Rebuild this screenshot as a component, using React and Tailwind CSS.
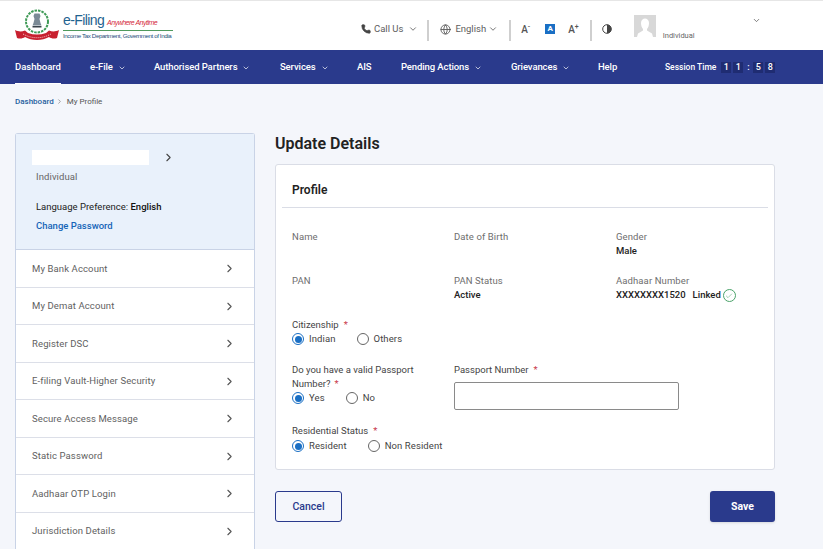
import React from 'react';
import { Phone, Globe, ChevronDown, ChevronRight, Check } from 'lucide-react';

const navItems = [
  { label: 'e-File', menu: true, w: 'w-[64px]' },
  { label: 'Authorised Partners', menu: true, w: 'w-[126px]' },
  { label: 'Services', menu: true, w: 'w-[77px]' },
  { label: 'AIS', w: 'w-[44px]' },
  { label: 'Pending Actions', menu: true, w: 'w-[110px]' },
  { label: 'Grievances', menu: true, w: 'w-[87px]' },
  { label: 'Help', w: 'w-[67px]' },
];

const sideItems = [
  'My Bank Account',
  'My Demat Account',
  'Register DSC',
  'E-filing Vault-Higher Security',
  'Secure Access Message',
  'Static Password',
  'Aadhaar OTP Login',
  'Jurisdiction Details',
];

const Emblem = () => (
  <svg width="44" height="32" viewBox="0 0 44 32" className="shrink-0">
    <circle cx="22" cy="12.500" r="11" fill="none" stroke="#3f9a56" strokeWidth="2" strokeDasharray="2.500 1" />
    <path d="M19.500 4.500h5l1 2.500-1 3 1 4 1 2.500h-9l1-2.500 1-4-1-3z" fill="#7b8a96" />
    <rect x="17.500" y="17" width="9" height="1.500" fill="#39424a" />
    <path d="M0 21c4 2 7 1.500 10 .5l3 2.500c6 2 12 2 18 0l3-2.500c3 1 6 1.500 10-.5l-2 8c-3 1-6 .5-8-1-7 4-17 4-24 0-2 1.500-5 2-8 1z" fill="#c8202f" />
    <path d="M8 25c9 5 19 5 28 0" fill="none" stroke="#f3c5c5" strokeWidth="1" strokeDasharray="1 1" />
  </svg>
);

const Logo = () => (
  <div className="flex items-start">
    <div className="mt-[1px]">
      <Emblem />
    </div>
    <div className="ml-[4px] mt-[5px] flex flex-col font-['Liberation_Sans',sans-serif]">
      <div className="flex items-baseline">
        <span className="text-[14px] leading-[15px] tracking-[-0.6px] text-[#1f6390]">e-Filing</span>
        <span className="ml-[3px] text-[7px] italic leading-[15px] tracking-[-0.5px] text-[#d5293b]">Anywhere Anytime</span>
      </div>
      <div className="h-[1px] w-[110px] bg-[#4f9a5d]" />
      <span className="w-[110px] whitespace-nowrap text-[6.200px] leading-[9px] tracking-[-0.4px] text-[#1d4f7c]">Income Tax Department, Government of India</span>
    </div>
  </div>
);

const TopBar = () => (
  <div className="flex h-[50px] shrink-0 items-center border-t border-[#e6e6e6] bg-white pt-[9px] text-[#5d5d5d]">
    <div className="ml-[15px] -mt-[2px] w-[346px] self-start">
      <Logo />
    </div>
    <Phone size={10} strokeWidth={2} className="-mt-[2px] text-[#444] fill-[#444]" />
    <span className="ml-[3px] -mt-[2px] text-[9.500px]">Call Us</span>
    <ChevronDown size={10} className="ml-[5px] -mt-[2px]" />
    <div className="ml-[9px] h-[21px] w-[2px] bg-[#cfcfcf]" />
    <Globe size={11} className="ml-[11px] -mt-[2px]" />
    <span className="ml-[4px] -mt-[2px] text-[9.500px]">English</span>
    <ChevronDown size={10} className="ml-[2px] -mt-[2px]" />
    <div className="ml-[11px] h-[21px] w-[2px] bg-[#cfcfcf]" />
    <span className="ml-[10px] -mt-[2px] text-[10px] font-medium text-[#555]">A<sup className="text-[7px]">-</sup></span>
    <span className="ml-[15px] -mt-[2px] flex h-[10px] w-[10px] items-center justify-center bg-[#1a6fc4] text-[8px] font-bold text-white">A</span>
    <span className="ml-[13px] -mt-[2px] text-[10px] font-medium text-[#555]">A<sup className="text-[7px]">+</sup></span>
    <div className="ml-[11px] h-[21px] w-[2px] bg-[#cfcfcf]" />
    <svg width="10" height="10" viewBox="0 0 10 10" className="ml-[10px] -mt-[2px]">
      <circle cx="5" cy="5" r="4.300" fill="none" stroke="#444" strokeWidth="1" />
      <path d="M5 .7a4.300 4.300 0 0 1 0 8.600z" fill="#444" />
    </svg>
    <svg width="22" height="22" viewBox="0 0 22 22" className="ml-[22px] mt-[5px] self-start">
      <rect width="22" height="22" fill="#d8d8d8" />
      <path d="M7 8c0-6 8-6 8 0 0 3-1 5-2 6v1.500l5 3 1 3.500H3l1-3.500 5-3V14C8 13 7 11 7 8z" fill="#fff" />
    </svg>
    <span className="ml-[7px] mt-[21px] self-start text-[7.500px] leading-[10px] text-[#666]">Individual</span>
    <ChevronDown size={9} className="ml-[57px] mt-[6px] self-start text-[#555]" />
  </div>
);

const NavBar = () => (
  <nav className="flex h-[34px] shrink-0 items-stretch bg-[#2a3a8c] pl-[15px] pt-[1px] text-[9.500px] font-medium text-white">
    <a className="mr-[29px] flex items-center border-b border-white">Dashboard</a>
    {navItems.map((item) => (
      <a key={item.label} className={`flex items-center tracking-[-0.1px] ${item.w}`}>
        <span>{item.label}</span>
        {item.menu && <ChevronDown size={8} strokeWidth={2} className="ml-[5px]" />}
      </a>
    ))}
    <div className="flex items-center text-[8.500px]">
      <span>Session Time</span>
      <span className="ml-[5px] flex h-[11px] w-[10px] items-center justify-center bg-[#1f2c72] text-[9px]">1</span>
      <span className="ml-[2px] flex h-[11px] w-[10px] items-center justify-center bg-[#1f2c72] text-[9px]">1</span>
      <span className="mx-[2.500px] flex w-[5px] justify-center text-[9px]">:</span>
      <span className="flex h-[11px] w-[10px] items-center justify-center bg-[#1f2c72] text-[9px]">5</span>
      <span className="ml-[2px] flex h-[11px] w-[10px] items-center justify-center bg-[#1f2c72] text-[9px]">8</span>
    </div>
  </nav>
);

const Sidebar = () => (
  <aside className="w-[240px] shrink-0 rounded-t-[3px] border border-b-0 border-[#c9d3e6] bg-white">
    <div className="h-[116px] border-b border-[#c9d3e6] bg-[#e9f1fb] pl-[16px] pt-[16px]">
      <div className="flex items-center">
        <div className="h-[15px] w-[117px] bg-white" />
        <ChevronRight size={13} strokeWidth={2} className="ml-[13px] text-[#444]" />
      </div>
      <div className="ml-[4px] mt-[6px] text-[9.500px] leading-[12px] tracking-[0.1px] text-[#666]">Individual</div>
      <div className="ml-[4px] mt-[18px] text-[9.500px] leading-[12px] text-[#222]">
        Language Preference: <span className="font-medium text-[#111]">English</span>
      </div>
      <a className="ml-[4px] mt-[7px] block text-[9.500px] font-medium leading-[12px] text-[#1565b8]">Change Password</a>
    </div>
    {sideItems.map((item) => (
      <div key={item} className="flex h-[37.500px] items-center justify-between border-b border-[#dcdfe8] pl-[16px] pr-[18px] pt-[1px] text-[9.500px] tracking-[0.12px] text-[#616161]">
        <span>{item}</span>
        <ChevronRight size={13} strokeWidth={2} className="text-[#555]" />
      </div>
    ))}
  </aside>
);

const Field = ({ label, value, children }) => (
  <div className="h-[44px]">
    <div className="text-[9.500px] leading-[14px] tracking-[0.1px] text-[#6e6e6e]">{label}</div>
    {value && <div className="text-[9.500px] font-medium leading-[14px] text-[#222]">{value}</div>}
    {children}
  </div>
);

const Radio = ({ label, checked, className }) => (
  <label className={`flex items-center ${className || ''}`}>
    <span className={`flex h-[12px] w-[12px] items-center justify-center rounded-full border ${checked ? 'border-[#1a6fc4]' : 'border-[#666]'}`}>
      {checked && <span className="h-[7px] w-[7px] rounded-full bg-[#1a6fc4]" />}
    </span>
    <span className="ml-[5px] text-[9.500px] tracking-[0.1px] text-[#444]">{label}</span>
  </label>
);

const Req = ({ className }) => <span className={`text-[#c8384a] ${className || 'ml-[5px]'}`}>*</span>;

const ProfileCard = () => (
  <section className="h-[306px] rounded-[3px] border border-[#dadde6] bg-white px-[6px]">
    <h2 className="h-[43px] border-b border-[#dadde6] pl-[10px] pt-[17px] text-[12px] font-semibold leading-[16px] text-[#222]">Profile</h2>
    <div className="px-[10px] pt-[22px]">
      <div className="grid grid-cols-[162px_162px_1fr]">
        <Field label="Name" />
        <Field label="Date of Birth" />
        <Field label="Gender" value="Male" />
        <Field label="PAN" />
        <Field label="PAN Status" value="Active" />
        <Field label="Aadhaar Number">
          <div className="flex items-center text-[9.500px] font-medium leading-[14px] text-[#222]">
            <span>XXXXXXXX1520</span>
            <span className="ml-[7px]">Linked</span>
            <span className="ml-[2px] mt-[1px] flex h-[13px] w-[13px] items-center justify-center rounded-full border border-[#4ba36a]">
              <Check size={8} strokeWidth={1.500} className="text-[#4ba36a]" />
            </span>
          </div>
        </Field>
      </div>
      <div className="text-[9.500px] leading-[14px] text-[#444]">
        Citizenship<Req />
      </div>
      <div className="flex h-[14px] items-center">
        <Radio label="Indian" checked />
        <Radio label="Others" className="ml-[21px]" />
      </div>
      <div className="mt-[17px] grid grid-cols-[162px_1fr]">
        <div>
          <div className="w-[135px] text-[9.500px] leading-[14px] text-[#444]">
            Do you have a valid Passport Number?<Req className="ml-[4px]" />
          </div>
          <div className="flex h-[14px] items-center">
            <Radio label="Yes" checked />
            <Radio label="No" className="ml-[21px]" />
          </div>
        </div>
        <div>
          <div className="text-[9.500px] leading-[14px] text-[#444]">
            Passport Number<Req />
          </div>
          <input className="mt-[5px] block h-[28px] w-[225px] rounded-[2px] border border-[#8a8a8a] bg-white" />
        </div>
      </div>
      <div className="mt-[14px] text-[9.500px] leading-[14px] text-[#444]">
        Residential Status<Req />
      </div>
      <div className="mt-[1px] flex h-[14px] items-center">
        <Radio label="Resident" checked />
        <Radio label="Non Resident" className="ml-[21px]" />
      </div>
    </div>
  </section>
);

const App = () => (
  <div className="flex h-screen flex-col overflow-hidden bg-[#f4f6fb] font-['Roboto',sans-serif]">
    <TopBar />
    <NavBar />
    <div className="flex h-[49px] shrink-0 items-start pl-[15px] pt-[13px] text-[8px] leading-[10px]">
      <a className="font-medium text-[#1f5f9e]">Dashboard</a>
      <ChevronRight size={7} className="ml-[2px] mt-[1px] text-[#666]" />
      <span className="ml-[4px] text-[#555]">My Profile</span>
    </div>
    <div className="flex flex-1 items-start pl-[15px]">
      <Sidebar />
      <main className="ml-[20px] w-[500px]">
        <h1 className="h-[31px] pt-[1px] text-[16px] font-semibold leading-[20px] text-[#222]">Update Details</h1>
        <ProfileCard />
        <div className="mt-[21px] flex items-center justify-between">
          <button className="h-[31px] w-[67px] rounded-[3px] border border-[#2a3a8c] text-[10.500px] font-medium text-[#2a3a8c]">Cancel</button>
          <button className="h-[31px] w-[65px] rounded-[3px] bg-[#2a3a8c] text-[10.500px] font-bold text-white shadow-sm">Save</button>
        </div>
      </main>
    </div>
  </div>
);

export default App;
